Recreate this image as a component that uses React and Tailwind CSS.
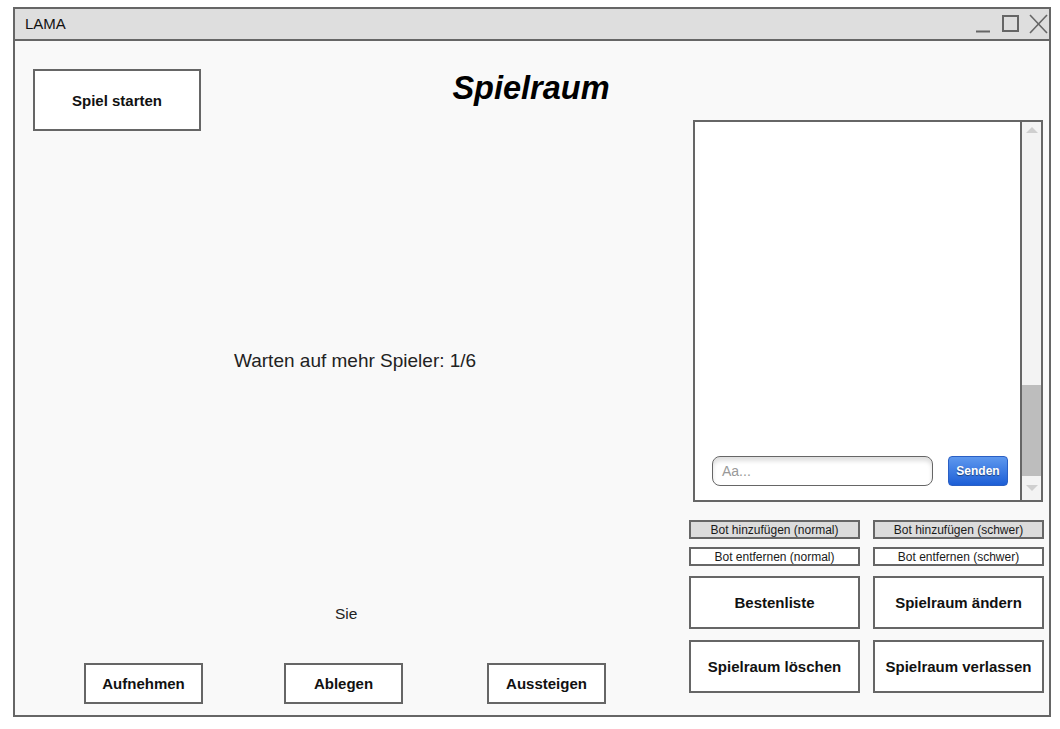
import React from 'react';

const font = { fontFamily: '"Liberation Sans", Arial, sans-serif' };

const WindowControls = () => (
  <svg width="75" height="22" viewBox="0 0 75 22" fill="none" stroke="#666">
    <line x1="2" y1="18.5" x2="16" y2="18.5" strokeWidth="2" />
    <rect x="29" y="3" width="15" height="15" strokeWidth="2" />
    <line x1="56" y1="2" x2="73" y2="20" strokeWidth="1.6" />
    <line x1="56" y1="20" x2="73" y2="2" strokeWidth="1.6" />
  </svg>
);

const BoxButton = ({ children, className = '' }) => (
  <div
    className={`flex items-center justify-center border-2 border-[#666] bg-white pt-[2px] font-bold text-[15px] text-[#111] ${className}`}
  >
    {children}
  </div>
);

const SmallButton = ({ children, grey = false }) => (
  <div
    className={`flex h-[19px] items-center justify-center border-2 border-[#666] pt-[1px] text-[12px] text-[#1a1a1a] ${
      grey ? 'bg-[#dcdcdc]' : 'bg-white'
    }`}
  >
    {children}
  </div>
);

const Chat = () => (
  <div className="ml-[4px] flex h-[382px] w-[350px]">
    <div className="flex flex-1 flex-col justify-end border-2 border-r-0 border-[#666] bg-white pb-[14px] pl-[17px]">
      <div className="flex items-center">
        <div className="flex h-[30px] w-[221px] items-center rounded-[8px] border border-[#666] bg-white pl-[9px] text-[14px] text-[#999] shadow-[inset_0_4px_4px_rgba(0,0,0,0.13)]">
          Aa...
        </div>
        <div className="ml-[15px] flex h-[30px] w-[60px] items-center justify-center rounded-[4px] border border-[#2a5fc4] bg-gradient-to-b from-[#5e98ee] to-[#1c5ed6] text-[12px] font-bold text-white [text-shadow:0_1px_1px_rgba(0,0,0,0.45)]">
          Senden
        </div>
      </div>
    </div>
    <div className="flex w-[23px] flex-col border-2 border-[#666] bg-[#f3f3f3]">
      <div className="flex h-[16px] items-center justify-center">
        <div className="h-0 w-0 border-x-[6px] border-b-[6px] border-x-transparent border-b-[#cfcfcf]" />
      </div>
      <div className="flex-1" />
      <div className="h-[91px] bg-[#bdbdbd]" />
      <div className="flex h-[24px] items-center justify-center">
        <div className="h-0 w-0 border-x-[6px] border-t-[6px] border-x-transparent border-t-[#cfcfcf]" />
      </div>
    </div>
  </div>
);

export default function App() {
  return (
    <div className="h-[729px] w-full bg-white pl-[13px] pt-[7px]" style={font}>
      <div className="flex h-[710px] w-[1038px] flex-col border-2 border-[#666] bg-[#f9f9f9]">
        <div className="flex h-[32px] items-center justify-between border-b-2 border-[#666] bg-[#dedede] pl-[10px] pr-0">
          <span className="text-[15px] text-[#111]">LAMA</span>
          <WindowControls />
        </div>

        <div className="flex flex-1">
          <div className="flex w-[674px] flex-col pt-[28px]">
            <div className="flex items-start">
              <BoxButton className="ml-[18px] h-[62px] w-[168px]">Spiel starten</BoxButton>
              <div className="ml-[199px] mt-[1px] w-[262px] text-center text-[32.5px] font-bold italic leading-[37px] text-black">
                Spielraum
              </div>
            </div>
            <div className="mt-[219px] pl-[219px] text-[19px] leading-[22px] text-[#222]">
              Warten auf mehr Spieler: 1/6
            </div>
            <div className="mt-[233px] pl-[320px] text-[15.5px] leading-[18px] text-[#222]">Sie</div>
            <div className="mt-[40px] flex pl-[69px]">
              <BoxButton className="h-[41px] w-[119px]">Aufnehmen</BoxButton>
              <BoxButton className="ml-[81px] h-[41px] w-[119px]">Ablegen</BoxButton>
              <BoxButton className="ml-[84px] h-[41px] w-[119px]">Aussteigen</BoxButton>
            </div>
          </div>

          <div className="flex w-[355px] flex-col pt-[79px]">
            <Chat />
            <div className="mt-[18px] grid grid-cols-[171px_171px] gap-x-[13px] gap-y-[8px]">
              <SmallButton grey>Bot hinzufügen (normal)</SmallButton>
              <SmallButton grey>Bot hinzufügen (schwer)</SmallButton>
              <SmallButton>Bot entfernen (normal)</SmallButton>
              <SmallButton>Bot entfernen (schwer)</SmallButton>
            </div>
            <div className="mt-[10px] grid grid-cols-[171px_171px] gap-x-[13px] gap-y-[11px]">
              <BoxButton className="h-[53px]">Bestenliste</BoxButton>
              <BoxButton className="h-[53px]">Spielraum ändern</BoxButton>
              <BoxButton className="h-[53px]">Spielraum löschen</BoxButton>
              <BoxButton className="h-[53px]">Spielraum verlassen</BoxButton>
            </div>
          </div>
        </div>
      </div>
    </div>
  );
}
